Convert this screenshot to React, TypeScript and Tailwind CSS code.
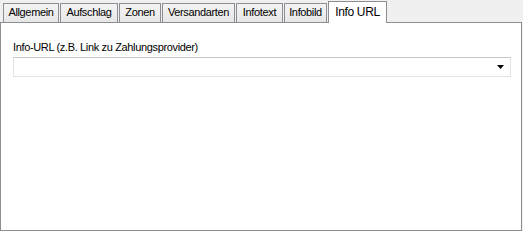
import React from "react"

const tabs = [
  { label: "Allgemein", w: "w-[56px]" },
  { label: "Aufschlag", w: "w-[58px]" },
  { label: "Zonen", w: "w-[42px]" },
  { label: "Versandarten", w: "w-[73px]" },
  { label: "Infotext", w: "w-[47px]" },
  { label: "Infobild", w: "w-[43px]" },
]

export default function App() {
  return (
    <div
      className="w-[523px] h-[231px] bg-[#f0f0f0] flex flex-col text-[11px] tracking-[-0.35px] text-black"
      style={{ fontFamily: '"Liberation Sans", Arial, sans-serif' }}
    >
      <div className="flex items-end pl-[3px] h-[22px] gap-[1px] relative z-10">
        {tabs.map((t) => (
          <div
            key={t.label}
            className={`${t.w} h-[19px] border border-b-0 border-[#8c8e94] bg-gradient-to-b from-[#f4f4f4] to-[#e6e6e6] flex items-center justify-center pb-[1px]`}
          >
            {t.label}
          </div>
        ))}
        <div className="w-[59px] h-[22px] -mb-[1px] border border-b-0 border-[#8c8e94] bg-white flex items-center justify-center pb-[2px] text-[12px]">
          Info URL
        </div>
      </div>
      <div className="w-[522px] h-[209px] border border-[#8c8e94] bg-white px-[12px] pt-[17px]">
        <div className="leading-[14px]">Info-URL (z.B. Link zu Zahlungsprovider)</div>
        <div className="mt-[3px] w-[498px] h-[20px] border border-[#e3e3e3] border-t-[#c8c8c8] flex items-center justify-end pr-[6px]">
          <svg width="7" height="4" viewBox="0 0 7 4">
            <path d="M0 0h7L3.5 4z" fill="#000" />
          </svg>
        </div>
      </div>
    </div>
  )
}
